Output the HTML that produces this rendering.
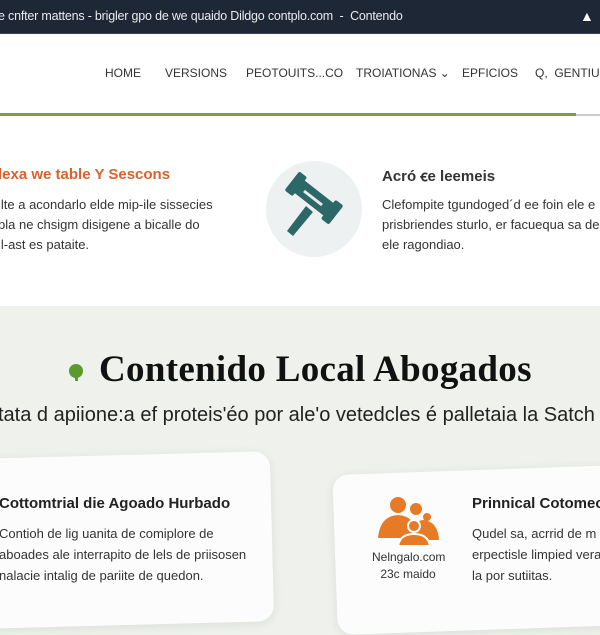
<!DOCTYPE html>
<html><head><meta charset="utf-8"><style>
*{margin:0;padding:0;box-sizing:border-box}
body{width:600px;height:600px;overflow:hidden;font-family:"Liberation Sans",Arial,sans-serif;background:#eef1ec;position:relative}
.a{position:absolute;white-space:nowrap}
.top{left:0;top:0;width:600px;height:34px;background:#1d2736;border-bottom:1px solid #3a4452}
.nav{font-size:12px;color:#333;top:66px}
.sec1{left:0;top:34px;width:600px;height:272px;background:#fff}
.p{font-size:13px;color:#333;line-height:20px}
.card{background:#fcfcfc;border-radius:16px;box-shadow:0 2px 10px rgba(0,0,0,.08)}
</style></head><body>
<div class="a sec1"></div>
<div class="a top"></div>
<div class="a" style="left:-2px;top:9px;font-size:12.5px;letter-spacing:-0.2px;color:#e8ebef">e cnfter mattens - brigler gpo de we quaido Dildgo contplo.com &nbsp;- &nbsp;Contendo</div>
<div class="a" style="left:580px;top:8px;font-size:14px;color:#fff;font-weight:bold">&#9650;</div>
<div class="a nav" style="left:105px">HOME</div>
<div class="a nav" style="left:165px">VERSIONS</div>
<div class="a nav" style="left:246px">PEOTOUITS...CO</div>
<div class="a nav" style="left:356px">TROIATIONAS &#8964;</div>
<div class="a nav" style="left:462px">EPFICIOS</div>
<div class="a nav" style="left:535px">Q,&nbsp; GENTIUS</div>
<div class="a" style="left:0;top:113px;width:576px;height:3px;background:#7f9c3f"></div>
<div class="a" style="left:576px;top:114px;width:24px;height:2px;background:#ccc"></div>
<div class="a" style="left:-2px;top:166px;font-size:15px;font-weight:bold;color:#d9622b">lexa we table Y Sescons</div>
<div class="a p" style="left:-2px;top:195px">ilte a acondarlo elde mip-ile sissecies<br>bla ne chsigm disigene a bicalle do<br>il-ast es pataite.</div>
<div class="a" style="left:266px;top:161px;width:96px;height:96px;border-radius:50%;background:#eef1f2"></div>
<svg class="a" style="left:282px;top:172px" width="70" height="70" viewBox="0 0 70 70"><g fill="#2d6868"><g transform="rotate(38 32 26)"><rect x="10" y="18" width="44" height="16" rx="2"/><rect x="4" y="14" width="10" height="24" rx="2"/><rect x="50" y="14" width="10" height="24" rx="2"/></g><path d="M24 34 L31 40 L11 64 L5 59 Z"/></g><path d="M22 19 L40 33" stroke="#e6eaea" stroke-width="3"/></svg>
<div class="a" style="left:382px;top:166px;font-size:15px;font-weight:bold;color:#333">Acró ꞓe leemeis</div>
<div class="a p" style="left:382px;top:195px">Clefompite tgundoged´d ee foin ele e<br>prisbriendes sturlo, er facuequa sa de<br>ele ragondiao.</div>
<div class="a" style="left:69px;top:364px;width:14px;height:14px;border-radius:50%;background:#5a9a2e"></div>
<div class="a" style="left:75px;top:374px;width:3px;height:7px;background:#5a9a2e"></div>
<div class="a" style="left:99px;top:348px;font-family:'Liberation Serif',serif;font-size:37px;font-weight:bold;color:#111;letter-spacing:0.3px">Contenido Local Abogados</div>
<div class="a" style="left:-2px;top:404px;font-size:20px;color:#222">tata d apiione:a ef proteis'éo por ale'o vetedcles é palletaia la Satch</div>
<div class="a card" style="left:-20px;top:455px;width:292px;height:170px;transform:rotate(-1.5deg)"></div>
<div class="a" style="left:-1px;top:495px;font-size:15px;font-weight:bold;color:#222">Cottomtrial die Agoado Hurbado</div>
<div class="a p" style="left:-1px;top:523px;line-height:21px">Contioh de lig uanita de comiplore de<br>aboades ale interrapito de lels de priisosen<br>nalacie intalig de pariite de quedon.</div>
<div class="a card" style="left:335px;top:470px;width:290px;height:160px;transform:rotate(-2deg)"></div>
<svg class="a" style="left:376px;top:496px" width="66" height="50" viewBox="0 0 66 50"><g fill="#e77a25"><circle cx="22" cy="9" r="8"/><path d="M2 42 Q4 20 22 19 Q40 20 42 42Z"/><circle cx="40" cy="13" r="6"/><circle cx="51" cy="21" r="4"/><path d="M36 36 Q38 24 48 24 Q62 26 63 44 L36 44Z"/><circle cx="38" cy="30" r="6" stroke="#fff" stroke-width="2"/><path d="M22 50 Q24 38 38 38 Q52 38 54 50Z" stroke="#fff" stroke-width="2"/></g></svg>
<div class="a" style="left:372px;top:549px;font-size:12px;color:#333;text-align:center;width:72px;line-height:17px">Nelngalo.com<br>23c maido</div>
<div class="a" style="left:472px;top:495px;font-size:15px;font-weight:bold;color:#222">Prinnical Cotomec</div>
<div class="a p" style="left:472px;top:523px;line-height:21px">Qudel sa, acrrid de m<br>erpectisle limpied vera<br>la por sutiitas.</div>
</body></html>
